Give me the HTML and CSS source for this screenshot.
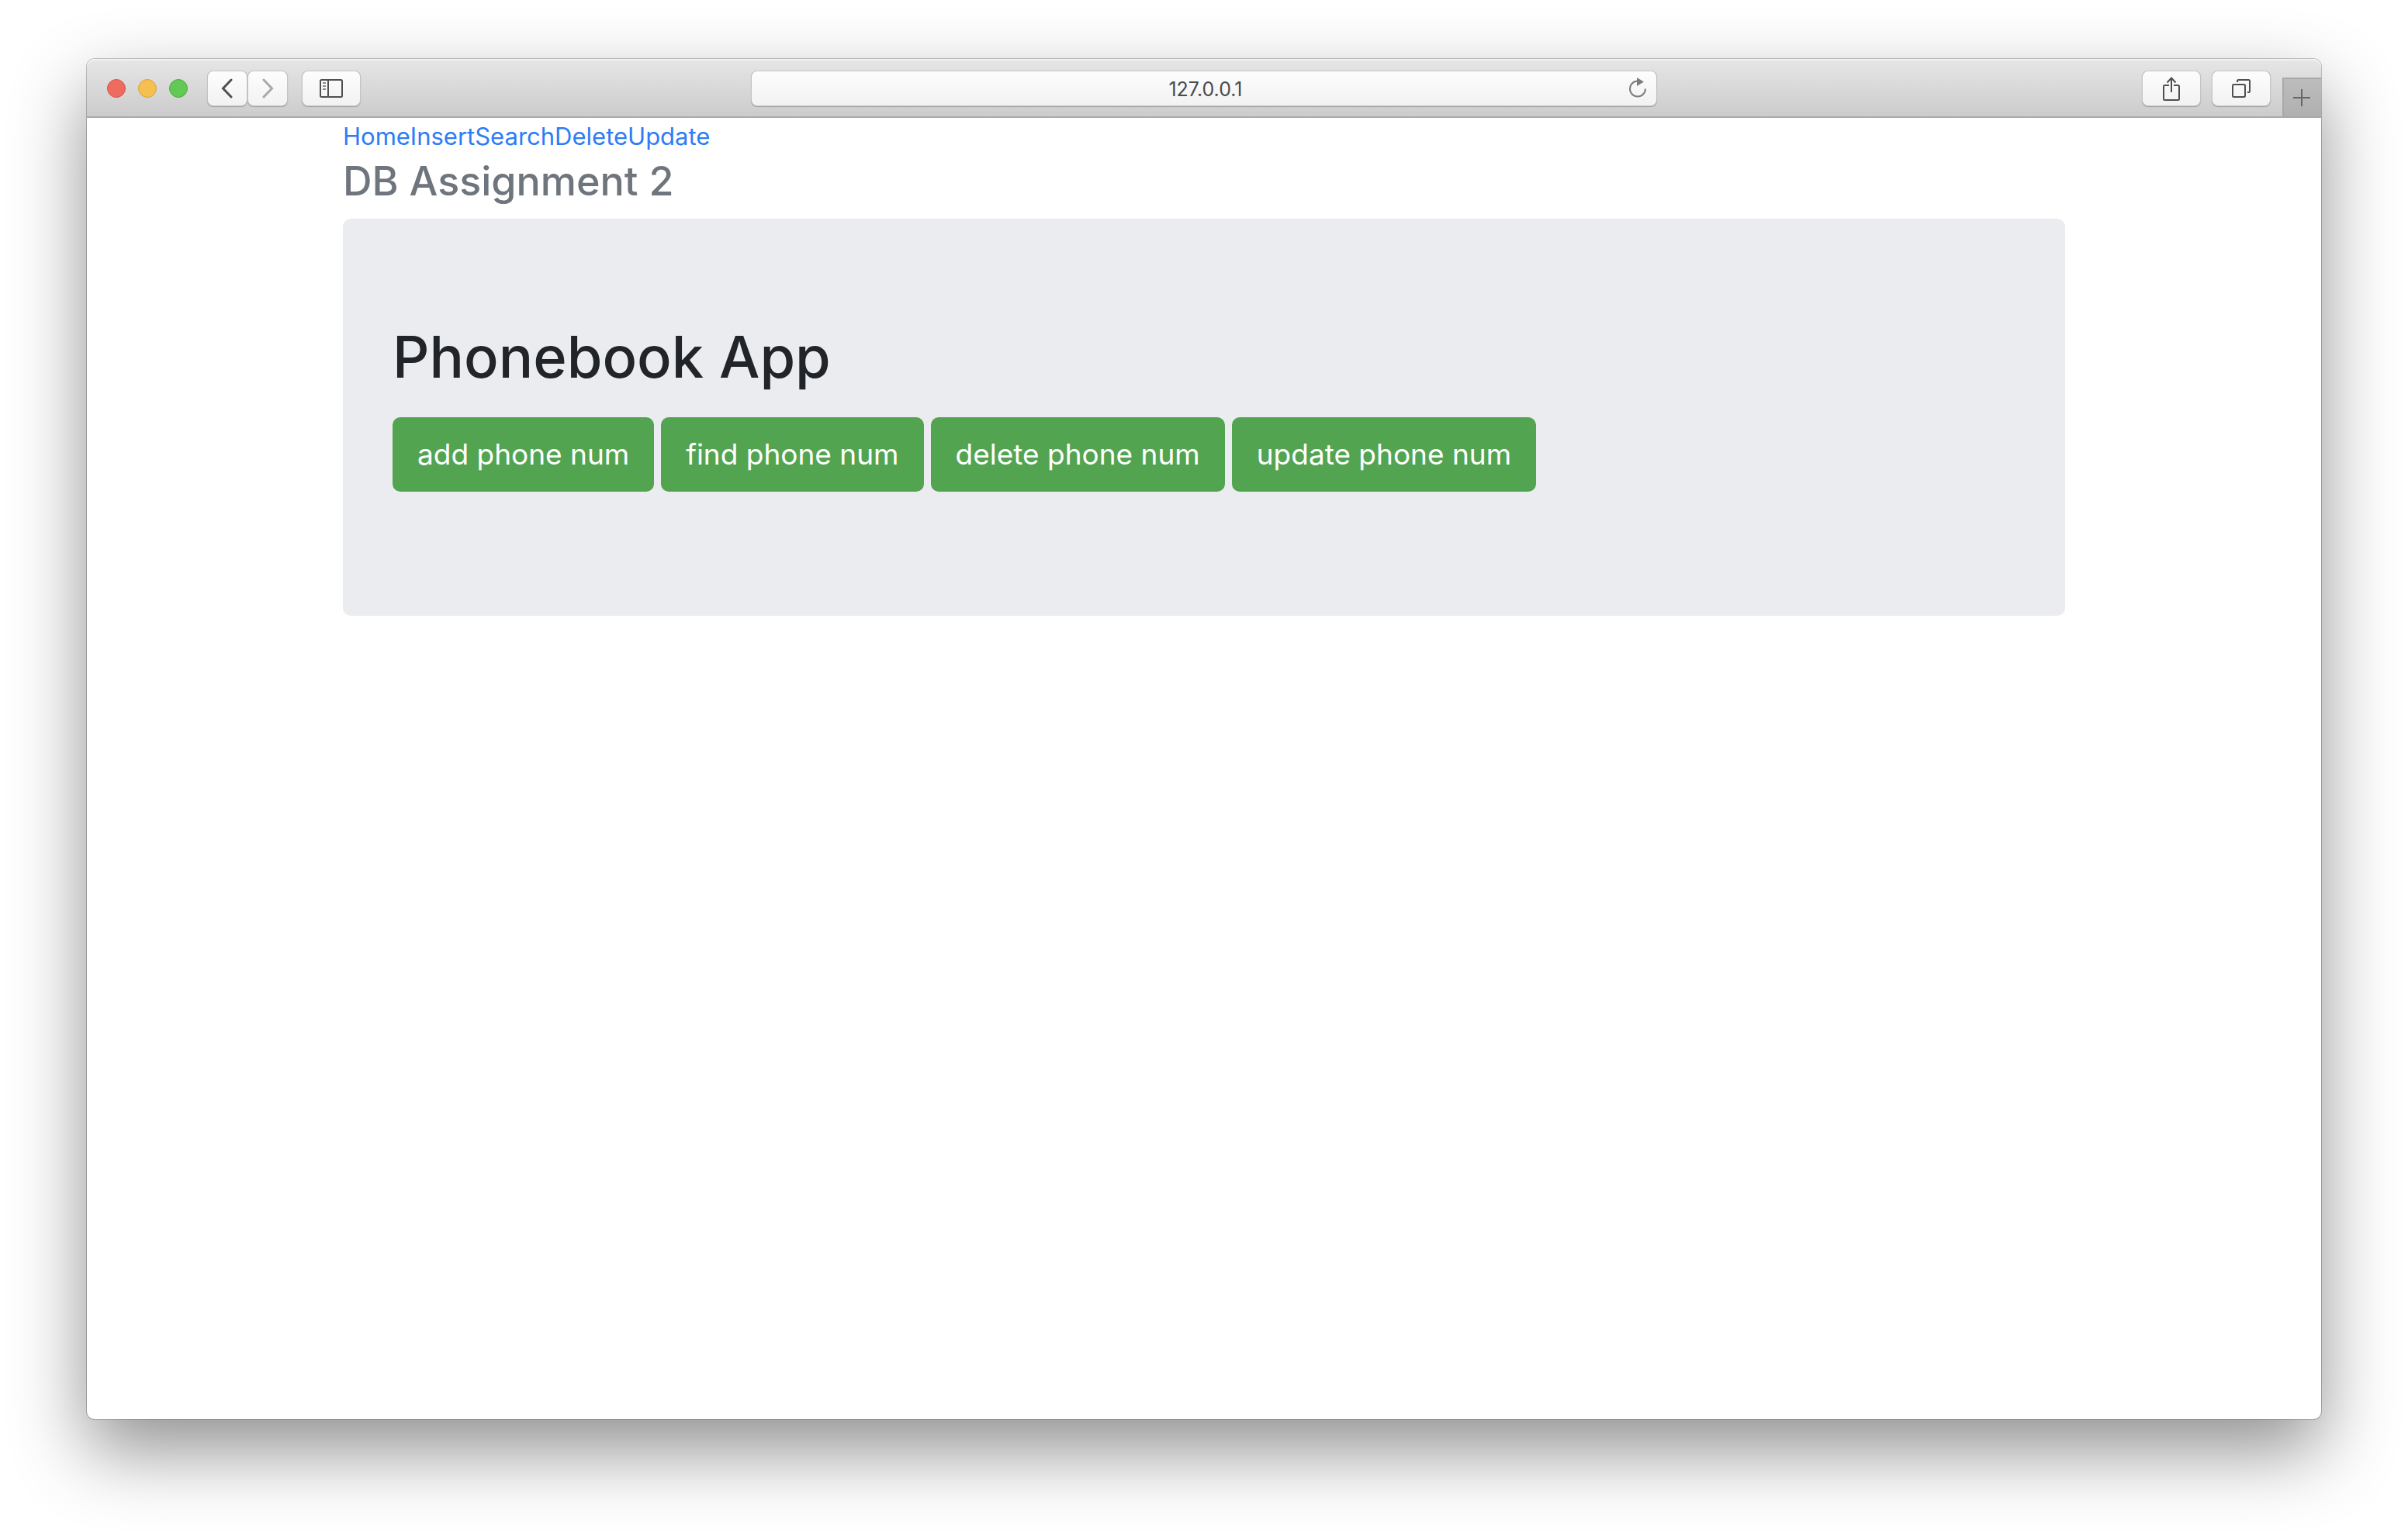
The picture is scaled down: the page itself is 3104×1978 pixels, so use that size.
FILE: index.html
```html
<!DOCTYPE html>
<html lang="en">
<head>
<meta charset="utf-8">
<title>Phonebook App</title>
<link rel="stylesheet" href="styles.css">
</head>
<body>
<div class="window">
  <header class="toolbar">
    <div class="toolbar-left">
      <div class="lights">
        <span class="light light-close"></span>
        <span class="light light-minimize"></span>
        <span class="light light-zoom"></span>
      </div>
      <div class="history">
        <button class="tool tool-small" type="button" aria-label="Back">
          <svg width="16" height="26" viewBox="0 0 16 26"><path d="M13 2 2.500 13 13 24" fill="none" stroke="#505050" stroke-width="3" stroke-linecap="round"/></svg>
        </button>
        <button class="tool tool-small" type="button" aria-label="Forward">
          <svg width="16" height="26" viewBox="0 0 16 26"><path d="M3 2 13.500 13 3 24" fill="none" stroke="#a8a8a8" stroke-width="3" stroke-linecap="round"/></svg>
        </button>
      </div>
      <button class="tool" type="button" aria-label="Sidebar">
        <svg width="30" height="24" viewBox="0 0 30 24" fill="none" stroke="#505050" stroke-width="2"><rect x="1" y="1" width="28" height="22" rx="1.500"/><path d="M11 1v22"/><path d="M4 5h4M4 9h4M4 13h4" stroke="#8a8a8a"/></svg>
      </button>
    </div>
    <div class="address">
      <input class="address-input" type="text" value="127.0.0.1" aria-label="Address">
      <button class="reload" type="button" aria-label="Reload">
        <svg width="24" height="28" viewBox="0 0 24 28"><path d="M12 5.500A10 10 0 1 0 22 15.500" fill="none" stroke="#7c7c7c" stroke-width="2"/><path d="M11 1v11l9-5.500z" fill="#7c7c7c"/></svg>
      </button>
    </div>
    <div class="toolbar-right">
      <button class="tool" type="button" aria-label="Share">
        <svg width="24" height="32" viewBox="0 0 24 32" fill="none" stroke="#505050" stroke-width="2"><path d="M9 12H3.500Q2 12 2 13.500V29.500Q2 31 3.500 31h17q1.500 0 1.500-1.500V13.500Q22 12 20.500 12H15"/><path d="M12 21V3M6.500 8.500 12 2.500l5.500 6"/></svg>
      </button>
      <button class="tool" type="button" aria-label="Show all tabs">
        <svg width="24" height="24" viewBox="0 0 24 24" fill="none" stroke="#505050" stroke-width="2"><rect x="1" y="7" width="16" height="16" rx="1.500"/><path d="M7 4V2.500Q7 1 8.500 1h13Q23 1 23 2.500v13Q23 17 21.500 17H20"/></svg>
      </button>
      <button class="new-tab" type="button" aria-label="New tab">
        <svg width="22" height="22" viewBox="0 0 22 22"><path d="M0 11h22M11 0v22" stroke="#666" stroke-width="2"/></svg>
      </button>
    </div>
  </header>
  <main class="container">
    <nav class="nav"><a href="#home">Home</a><a href="#insert">Insert</a><a href="#search">Search</a><a href="#delete">Delete</a><a href="#update">Update</a></nav>
    <h3 class="subtitle">DB Assignment 2</h3>
    <section class="jumbotron">
      <h1 class="title">Phonebook App</h1>
      <div class="actions">
        <button class="btn" type="button">add phone num</button>
        <button class="btn" type="button">find phone num</button>
        <button class="btn" type="button">delete phone num</button>
        <button class="btn" type="button">update phone num</button>
      </div>
    </section>
  </main>
</div>
</body>
</html>
```
FILE: styles.css
```css
* { box-sizing: border-box; }

body {
  margin: 0;
  padding: 76px 112px 148px;
  background: #fff;
  color: #212529;
  font-family: Inter, "Liberation Sans", sans-serif;
}

.window {
  min-height: calc(100vh - 224px);
  border-radius: 10px;
  background: #fff;
  box-shadow: 0 0 0 1px rgba(0, 0, 0, 0.22), 0 40px 96px rgba(0, 0, 0, 0.44);
}

.toolbar {
  display: grid;
  grid-template-columns: 1fr 41% 1fr;
  align-items: center;
  height: 76px;
  border-radius: 10px 10px 0 0;
  background: linear-gradient(#e6e6e6, #cbcbcb);
  box-shadow: inset 0 2px 0 #f2f2f2, inset 0 -2px 0 #a9a9a9;
}

.toolbar-left { display: flex; align-items: center; gap: 20px; padding-left: 26px; }

.lights { display: flex; gap: 16px; margin-right: 6px; }
.light { width: 24px; height: 24px; border: 1px solid; border-radius: 50%; }
.light-close { background: #ee6b60; border-color: #d9544a; }
.light-minimize { background: #f5c04f; border-color: #dba33a; }
.light-zoom { background: #62c955; border-color: #4eac3d; }

.history { display: flex; gap: 2px; }

.tool {
  display: flex;
  align-items: center;
  justify-content: center;
  width: 74px;
  height: 44px;
  padding: 0;
  border: 0;
  border-radius: 7px;
  background: linear-gradient(#fdfdfd, #f2f2f2);
  box-shadow: 0 0 0 1px #c4c4c4, 0 1px 1px 1px #a0a0a0;
}
.tool-small { width: 50px; }

.address { position: relative; padding: 0 7px; }
.address-input {
  display: block;
  width: 100%;
  height: 44px;
  padding: 2px 48px 0 52px;
  border: 0;
  border-radius: 7px;
  background: linear-gradient(#fdfdfd, #f2f2f2);
  box-shadow: 0 0 0 1px #c4c4c4, 0 1px 1px 1px #a0a0a0;
  color: #4a4a4a;
  font: 25px/42px Inter, "Liberation Sans", sans-serif;
  text-align: center;
}
.reload {
  position: absolute;
  top: 7px;
  right: 19px;
  padding: 0;
  border: 0;
  background: none;
}
.reload svg { display: block; }

.toolbar-right {
  display: flex;
  align-items: center;
  justify-content: flex-end;
  gap: 16px;
  height: 100%;
}
.new-tab {
  display: flex;
  align-items: center;
  justify-content: center;
  align-self: flex-end;
  width: 50px;
  height: 50px;
  margin-bottom: 2px;
  padding: 0 2px 0 0;
  border: solid #a9a9a9;
  border-width: 2px 0 0 2px;
  background: linear-gradient(#bcbcbc, #b0b0b0);
}

.container { max-width: 2220px; margin: 0 auto; }

.nav { display: flex; font-size: 31px; line-height: 48px; }
.nav a { color: #2e7cf6; text-decoration: none; }

.subtitle {
  margin: 0 0 14px;
  color: #6f757d;
  font-size: 52px;
  font-weight: 500;
  line-height: 68px;
}

.jumbotron {
  padding: 128px 64px 160px;
  border-radius: 10px;
  background: #ebecf0;
}
.title { margin: 0 0 28px; font-size: 74px; font-weight: 500; line-height: 100px; }

.actions { display: flex; flex-wrap: wrap; gap: 9px; }
.btn {
  padding: 16px 30px;
  border: 2px solid #53a451;
  border-radius: 10px;
  background: #53a451;
  color: #fff;
  font: 37px/60px Inter, "Liberation Sans", sans-serif;
}
```
